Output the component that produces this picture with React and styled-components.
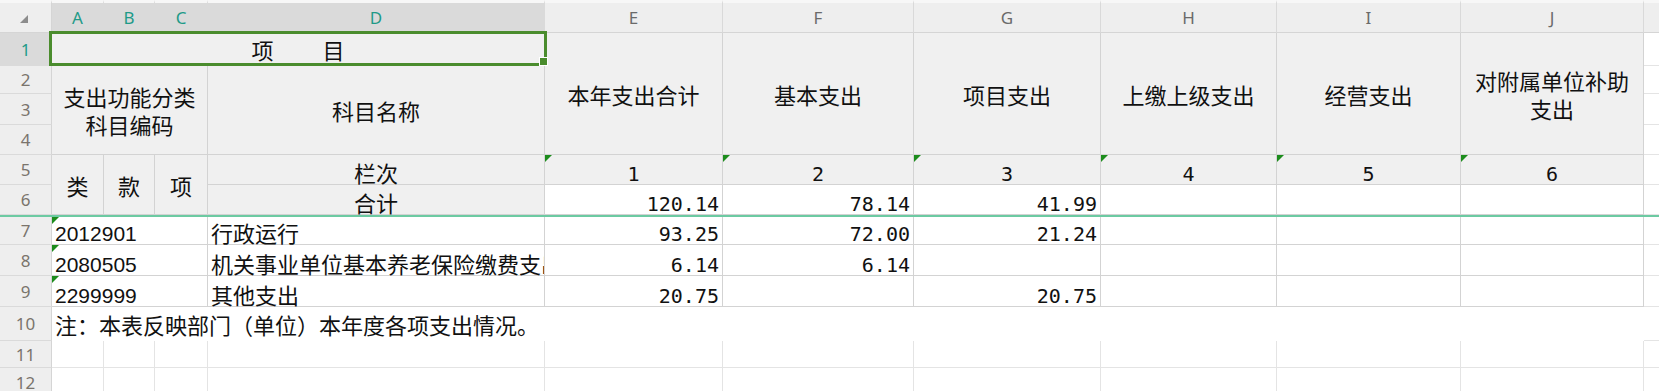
import React from "react";
import styled, { createGlobalStyle, css } from "styled-components";

const GlobalStyle = createGlobalStyle`
  html, body { margin: 0; padding: 0; background: #ffffff; overflow: hidden; }
  #root { width: 1659px; height: 391px; overflow: hidden; }
`;

const COL_KEYS = ["A", "B", "C", "D", "E", "F", "G", "H", "I", "J", "K"];
const colLine = (k) => COL_KEYS.indexOf(k) + 2;
const rowLine = (n) => (n <= 6 ? n + 1 : n + 2);

const Sheet = styled.div`
  display: grid;
  grid-template-columns: 52px 52px 51px 53px 337px 178px 191px 187px 176px 184px 183px 120px;
  grid-template-rows: 33px 33px 28px 31px 30px 30px 30px 2px 28px 31px 31px 34px 27px 30px;
  width: max-content;
  background: #ffffff;
  color: #111111;
`;

const headerBase = css`
  box-sizing: border-box;
  grid-row: 1;
  border-top: 3px solid #f7f7f7;
  border-bottom: 1px solid #d5d5d5;
  display: flex;
  align-items: center;
  justify-content: center;
`;

const Corner = styled.div`
  ${headerBase};
  grid-column: 1;
  background: #eeeeee;
  border-right: 1px solid #d5d5d5;
`;

const CornerMark = styled.svg`
  width: 8px;
  height: 8px;
  margin: 3px 4px 0 0;
`;

const ColHead = styled.div`
  ${headerBase};
  grid-column: ${(p) => p.$col};
  background: ${(p) => (p.$selected ? "#dadada" : "#eeeeee")};
  border-right: 1px solid ${(p) => (p.$selected ? "#dadada" : "#d9d9d9")};
  color: ${(p) => (p.$selected ? "#1f9a88" : "#6a6a6a")};
  font-family: "Noto Sans", "Open Sans", sans-serif;
  font-size: 17px;
  line-height: 1;
`;

const RowHead = styled.div`
  box-sizing: border-box;
  grid-column: 1;
  grid-row: ${(p) => p.$row};
  background: ${(p) => (p.$selected ? "#dadada" : "#eeeeee")};
  border-bottom: 1px solid #dadada;
  border-right: 1px solid #d5d5d5;
  color: ${(p) => (p.$selected ? "#1f9a88" : "#7a746c")};
  font-family: "Noto Sans", "Open Sans", sans-serif;
  font-size: 17px;
  line-height: 1;
  display: flex;
  align-items: center;
  justify-content: center;
`;

const FreezeLine = styled.div`
  grid-column: 1 / -1;
  grid-row: 8;
  background: #6ccaa2;
`;

const borderColors = { table: "#d3d3d3", light: "#e4e4e4", none: "transparent" };
const justify = { left: "flex-start", center: "center", right: "flex-end" };
const fonts = {
  cjk: css`
    font-family: "Noto Sans CJK SC", "Noto Sans", sans-serif;
    font-size: 22px;
    line-height: 24px;
  `,
  code: css`
    font-family: "Liberation Sans", Arial, sans-serif;
    font-size: 21px;
    line-height: 20px;
  `,
  num: css`
    font-family: "DejaVu Sans Mono", "Liberation Mono", monospace;
    font-size: 20px;
    line-height: 20px;
  `,
};

const Cell = styled.div`
  position: relative;
  z-index: ${(p) => (p.$raised ? 3 : "auto")};
  box-sizing: border-box;
  min-width: 0;
  grid-column: ${(p) => p.$col};
  grid-row: ${(p) => p.$row};
  background: ${(p) => (p.$tone === "head" ? "#f0f0f0" : "#ffffff")};
  border-right: 1px solid ${(p) => borderColors[p.$line]};
  border-bottom: 1px solid ${(p) => borderColors[p.$line]};
  display: flex;
  align-items: ${(p) => (p.$v === "bottom" ? "flex-end" : "center")};
  justify-content: ${(p) => justify[p.$h]};
  padding: 0 3px;
  overflow-x: ${(p) => (p.$raised ? "visible" : "clip")};
  overflow-y: visible;
  white-space: nowrap;
  ${(p) => fonts[p.$font]};

  &::before {
    content: "";
    display: ${(p) => (p.$flag ? "block" : "none")};
    position: absolute;
    left: 0;
    top: 0;
    width: 0;
    height: 0;
    border-top: 7px solid #1c8c1c;
    border-right: 7px solid transparent;
  }
`;

const Text = styled.span`
  text-align: center;
  letter-spacing: ${(p) => p.$spacing || "0"};
  padding-left: ${(p) => p.$spacing || "0"};
  line-height: ${(p) => (p.$multi ? "28px" : "inherit")};
`;

const SelectionFrame = styled.div`
  position: absolute;
  left: -3px;
  top: -2px;
  right: -3px;
  bottom: -1px;
  border: 3px solid #4a8c2d;
  pointer-events: none;
`;

const FillHandle = styled.div`
  position: absolute;
  right: -4px;
  bottom: -3px;
  width: 7px;
  height: 7px;
  background: #4a8c2d;
  border: 1px solid #ffffff;
`;

const H = "head";
const W = "white";

const spec = [
  { c: "A", cs: 4, r: 1, tone: H, font: "cjk", h: "center", text: "项　　目", spacing: "1.7px", selected: true },
  { c: "A", cs: 3, r: 2, rs: 3, tone: H, font: "cjk", h: "center", lines: ["支出功能分类", "科目编码"] },
  { c: "D", r: 2, rs: 3, tone: H, font: "cjk", h: "center", text: "科目名称" },
  { c: "E", r: 1, rs: 4, tone: H, font: "cjk", h: "center", text: "本年支出合计" },
  { c: "F", r: 1, rs: 4, tone: H, font: "cjk", h: "center", text: "基本支出" },
  { c: "G", r: 1, rs: 4, tone: H, font: "cjk", h: "center", text: "项目支出" },
  { c: "H", r: 1, rs: 4, tone: H, font: "cjk", h: "center", text: "上缴上级支出" },
  { c: "I", r: 1, rs: 4, tone: H, font: "cjk", h: "center", text: "经营支出" },
  { c: "J", r: 1, rs: 4, tone: H, font: "cjk", h: "center", lines: ["对附属单位补助", "支出"] },
  { c: "A", r: 5, rs: 2, tone: H, font: "cjk", h: "center", text: "类" },
  { c: "B", r: 5, rs: 2, tone: H, font: "cjk", h: "center", text: "款" },
  { c: "C", r: 5, rs: 2, tone: H, font: "cjk", h: "center", text: "项" },
  { c: "D", r: 5, tone: H, font: "cjk", h: "center", v: "bottom", text: "栏次" },
  ...["E", "F", "G", "H", "I", "J"].map((c, i) => ({
    c, r: 5, tone: H, font: "num", h: "center", v: "bottom", text: String(i + 1), flag: true,
  })),
  { c: "D", r: 6, tone: H, font: "cjk", h: "center", v: "bottom", text: "合计" },
  { c: "E", r: 6, tone: W, font: "num", h: "right", v: "bottom", text: "120.14" },
  { c: "F", r: 6, tone: W, font: "num", h: "right", v: "bottom", text: "78.14" },
  { c: "G", r: 6, tone: W, font: "num", h: "right", v: "bottom", text: "41.99" },
  { c: "A", cs: 3, r: 7, tone: W, font: "code", h: "left", v: "bottom", text: "2012901", flag: true },
  { c: "D", r: 7, tone: W, font: "cjk", h: "left", v: "bottom", text: "行政运行" },
  { c: "E", r: 7, tone: W, font: "num", h: "right", v: "bottom", text: "93.25" },
  { c: "F", r: 7, tone: W, font: "num", h: "right", v: "bottom", text: "72.00" },
  { c: "G", r: 7, tone: W, font: "num", h: "right", v: "bottom", text: "21.24" },
  { c: "A", cs: 3, r: 8, tone: W, font: "code", h: "left", v: "bottom", text: "2080505", flag: true },
  { c: "D", r: 8, tone: W, font: "cjk", h: "left", v: "bottom", text: "机关事业单位基本养老保险缴费支出" },
  { c: "E", r: 8, tone: W, font: "num", h: "right", v: "bottom", text: "6.14" },
  { c: "F", r: 8, tone: W, font: "num", h: "right", v: "bottom", text: "6.14" },
  { c: "A", cs: 3, r: 9, tone: W, font: "code", h: "left", v: "bottom", text: "2299999", flag: true },
  { c: "D", r: 9, tone: W, font: "cjk", h: "left", v: "bottom", text: "其他支出" },
  { c: "E", r: 9, tone: W, font: "num", h: "right", v: "bottom", text: "20.75" },
  { c: "G", r: 9, tone: W, font: "num", h: "right", v: "bottom", text: "20.75" },
  { c: "A", cs: 10, r: 10, tone: W, font: "cjk", h: "left", line: "none", text: "注：本表反映部门（单位）本年度各项支出情况。" },
];

function buildCells() {
  const taken = new Set();
  const out = spec.map((s) => {
    const cs = s.cs || 1;
    const rs = s.rs || 1;
    const ci = COL_KEYS.indexOf(s.c);
    for (let r = s.r; r < s.r + rs; r++) {
      for (let c = ci; c < ci + cs; c++) taken.add(`${r}:${c}`);
    }
    return {
      ...s,
      col: `${colLine(s.c)} / span ${cs}`,
      row: `${rowLine(s.r)} / span ${rs}`,
      line: s.line || "table",
      v: s.v || "center",
    };
  });
  for (let r = 1; r <= 12; r++) {
    COL_KEYS.forEach((key, c) => {
      if (taken.has(`${r}:${c}`)) return;
      const light = key === "K" || r >= 10;
      out.push({
        c: key,
        r,
        col: `${colLine(key)}`,
        row: `${rowLine(r)}`,
        tone: W,
        font: "cjk",
        h: "left",
        v: "center",
        line: light ? "light" : "table",
      });
    });
  }
  return out;
}

const cells = buildCells();

export default function App() {
  return (
    <>
      <GlobalStyle />
      <Sheet>
        <Corner>
          <CornerMark viewBox="0 0 8 8">
            <polygon points="8,0 8,8 0,8" fill="#8c8c8c" />
          </CornerMark>
        </Corner>
        {COL_KEYS.map((k) => (
          <ColHead key={k} $col={colLine(k)} $selected={"ABCD".includes(k)}>
            {k === "K" ? "" : k}
          </ColHead>
        ))}
        {Array.from({ length: 12 }, (_, i) => i + 1).map((n) => (
          <RowHead key={n} $row={rowLine(n)} $selected={n === 1}>
            {n}
          </RowHead>
        ))}
        <FreezeLine />
        {cells.map((cell) => (
          <Cell
            key={`${cell.c}${cell.r}`}
            $col={cell.col}
            $row={cell.row}
            $tone={cell.tone}
            $line={cell.line}
            $h={cell.h}
            $v={cell.v}
            $font={cell.font}
            $flag={cell.flag}
            $raised={cell.selected}
          >
            {cell.lines ? (
              <Text $multi>
                {cell.lines[0]}
                <br />
                {cell.lines[1]}
              </Text>
            ) : cell.text ? (
              <Text $spacing={cell.spacing}>{cell.text}</Text>
            ) : null}
            {cell.selected && (
              <SelectionFrame>
                <FillHandle />
              </SelectionFrame>
            )}
          </Cell>
        ))}
      </Sheet>
    </>
  );
}
